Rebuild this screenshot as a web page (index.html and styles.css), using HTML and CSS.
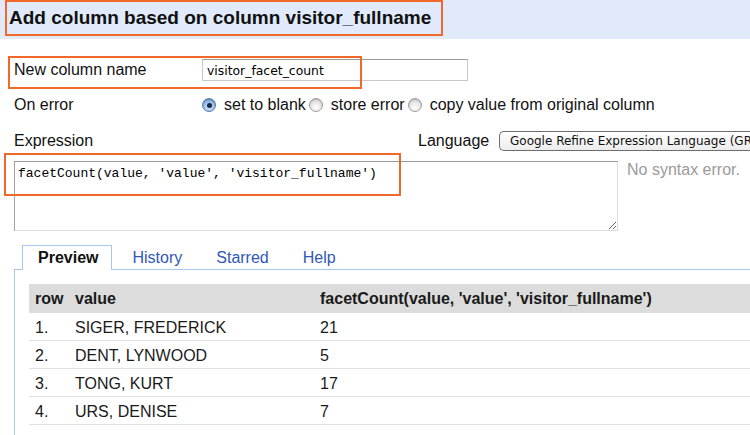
FILE: index.html
```html
<!DOCTYPE html>
<html>
<head>
<meta charset="utf-8">
<link rel="stylesheet" href="styles.css">
</head>
<body>
<div class="page">
  <div class="title">Add column based on column visitor_fullname</div>

  <div class="form">
    <div class="row name-row">
      <span class="label">New column name</span>
      <input class="name-input" type="text" value="visitor_facet_count">
    </div>
    <div class="row error-row">
      <span class="label">On error</span>
      <div class="radios">
        <span class="radio checked"></span><span class="opt">set to blank</span>
        <span class="radio"></span><span class="opt">store error</span>
        <span class="radio"></span><span class="opt">copy value from original column</span>
      </div>
    </div>
    <div class="row expr-head">
      <span class="expr-label">Expression</span>
      <span class="lang-label">Language</span>
      <span class="select">Google Refine Expression Language (GREL)</span>
    </div>
    <div class="expr-row">
      <textarea class="expr" readonly>facetCount(value, 'value', 'visitor_fullname')</textarea>
      <div class="status">No syntax error.</div>
    </div>
  </div>

  <div class="tabs">
    <span class="tab active">Preview</span>
    <span class="tab">History</span>
    <span class="tab">Starred</span>
    <span class="tab">Help</span>
  </div>
  <div class="panel">
    <table class="preview">
      <thead>
        <tr><th class="c-row">row</th><th class="c-val">value</th><th>facetCount(value, 'value', 'visitor_fullname')</th></tr>
      </thead>
      <tbody>
        <tr><td>1.</td><td>SIGER, FREDERICK</td><td>21</td></tr>
        <tr><td>2.</td><td>DENT, LYNWOOD</td><td>5</td></tr>
        <tr><td>3.</td><td>TONG, KURT</td><td>17</td></tr>
        <tr><td>4.</td><td>URS, DENISE</td><td>7</td></tr>
      </tbody>
    </table>
  </div>

  <div class="mark mark-title"></div>
  <div class="mark mark-name"></div>
  <div class="mark mark-expr"></div>
</div>
</body>
</html>
```
FILE: styles.css
```css
html, body {
  margin: 0;
  padding: 0;
  background: #fff;
}
body {
  width: 750px;
  height: 435px;
  overflow: hidden;
  font-family: "Liberation Sans", Arial, sans-serif;
  font-size: 16px;
  color: #111;
}
.page {
  position: relative;
  width: 750px;
  height: 435px;
  overflow: hidden;
}
.title {
  height: 39px;
  line-height: 35px;
  background: #e0eafb;
  padding-left: 9px;
  font-weight: bold;
  font-size: 19px;
  color: #111;
  box-sizing: border-box;
}
.form {
  padding-left: 14px;
}
.row {
  display: flex;
  align-items: center;
}
.label {
  width: 188px;
  flex: none;
}
.name-row {
  margin-top: 20px;
  height: 22px;
}
.name-input {
  width: 266px;
  height: 22px;
  box-sizing: border-box;
  margin: 0;
  border: 1px solid #c8c8c8;
  border-top-color: #9a9a9a;
  padding: 0 0 0 4px;
  font-family: "DejaVu Sans", sans-serif;
  font-size: 12.4px;
  color: #000;
  outline: none;
}
.error-row {
  margin-top: 14px;
  height: 20px;
}
.radios {
  display: flex;
  align-items: center;
}
.radio {
  width: 14px;
  height: 14px;
  box-sizing: border-box;
  border-radius: 50%;
  border: 1px solid #9c9c9c;
  background: radial-gradient(circle at 50% 70%, #ffffff 0%, #e4e4e4 55%, #c4c4c4 100%);
  box-shadow: inset 0 1px 1px rgba(0,0,0,0.15);
  position: relative;
  flex: none;
}
.radio.checked {
  border-color: #5579a8;
  background: radial-gradient(circle at 50% 70%, #d6e8fb 0%, #8fb6e6 60%, #5b88c6 100%);
}
.radio.checked::after {
  content: "";
  position: absolute;
  left: 3.5px;
  top: 3.5px;
  width: 5px;
  height: 5px;
  border-radius: 50%;
  background: #1a2a44;
}
.opt {
  margin-left: 8px;
  margin-right: 3px;
}
.expr-head {
  margin-top: 16px;
  height: 20px;
}
.expr-label {
  width: 404px;
  flex: none;
}
.lang-label {
  width: 81px;
  flex: none;
}
.select {
  flex: none;
  width: 251px;
  height: 20px;
  line-height: 18px;
  box-sizing: border-box;
  border: 1px solid #6d6d6d;
  border-right: none;
  border-radius: 5px 0 0 5px;
  background: linear-gradient(#ffffff, #ececec);
  padding-left: 10px;
  font-family: "DejaVu Sans", sans-serif;
  font-size: 12px;
  color: #111;
  white-space: nowrap;
  overflow: hidden;
}
.expr-row {
  display: flex;
  align-items: flex-start;
  margin-top: 10px;
}
.expr {
  width: 604px;
  height: 70px;
  box-sizing: border-box;
  margin: 0;
  border: 1px solid #dadada;
  border-top-color: #9a9a9a;
  border-left-color: #a4a4a4;
  padding: 4px 3px;
  font-family: "Liberation Mono", "Courier New", monospace;
  font-size: 13px;
  line-height: 15px;
  color: #000;
  resize: both;
  outline: none;
  overflow: hidden;
}
.status {
  margin-left: 9px;
  color: #9a9a9a;
  line-height: 18px;
}
.tabs {
  margin-top: 14px;
  padding-left: 22px;
  display: flex;
  height: 24px;
  position: relative;
  z-index: 1;
}
.tab {
  display: block;
  height: 25px;
  line-height: 24px;
  box-sizing: border-box;
  padding: 0 13px 0 15px;
  margin-right: 4px;
  border: 1px solid transparent;
  border-bottom: none;
  color: #2f58b8;
}
.tab.active {
  color: #111;
  font-weight: bold;
  border-color: #a9c6ef;
  background: #fff;
}
.panel {
  border-top: 1px solid #a9c6ef;
  border-left: 1px solid #a9c6ef;
  margin-left: 14px;
  padding: 14px 0 0 14px;
  height: 151px;
}
.preview {
  border-collapse: collapse;
  width: 721px;
  color: #1a1a1a;
}
.preview th {
  background: #dcdcdc;
  font-weight: bold;
  text-align: left;
  height: 29px;
  padding: 0 0 0 6px;
  white-space: nowrap;
}
.preview td {
  height: 24px;
  padding: 3px 0 0 6px;
  border-bottom: 1px solid #e2e2e2;
  white-space: nowrap;
}
.c-row {
  width: 34px;
}
.c-val {
  width: 239px;
}
.mark {
  position: absolute;
  border: 2px solid #f0692a;
  box-sizing: border-box;
  pointer-events: none;
}
.mark-title {
  left: 5px;
  top: 0;
  width: 438px;
  height: 36px;
}
.mark-name {
  left: 8px;
  top: 56px;
  width: 354px;
  height: 33px;
}
.mark-expr {
  left: 4px;
  top: 153px;
  width: 397px;
  height: 43px;
}
```
